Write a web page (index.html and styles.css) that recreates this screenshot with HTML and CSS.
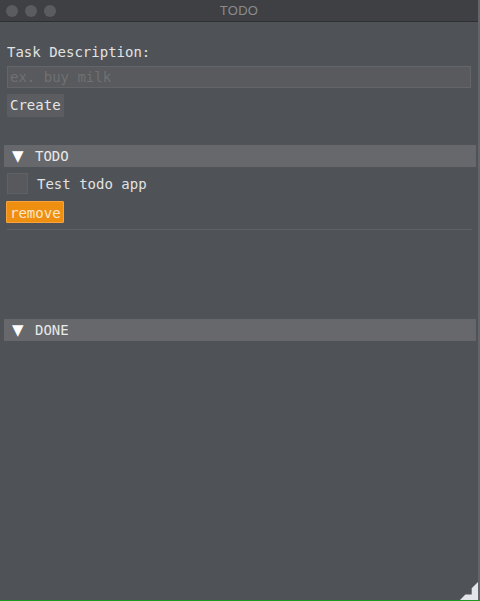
FILE: index.html
```html
<!DOCTYPE html>
<html>
<head>
<meta charset="utf-8">
<link rel="stylesheet" href="styles.css">
</head>
<body>
<div class="window">
  <div class="titlebar">
    <div class="lights"><span class="light"></span><span class="light"></span><span class="light"></span></div>
    <div class="title">TODO</div>
  </div>
  <div class="content">
    <div class="label">Task Description:</div>
    <div class="input">ex. buy milk</div>
    <div class="btn create">Create</div>
    <div class="header todo-header"><span class="tri">▼</span><span>TODO</span></div>
    <div class="item">
      <span class="check"></span><span class="item-text">Test todo app</span>
    </div>
    <div class="btn remove">remove</div>
    <div class="sep"></div>
    <div class="header done-header"><span class="tri">▼</span><span>DONE</span></div>
  </div>
  <div class="grip"></div>
</div>
</body>
</html>
```
FILE: styles.css
```css
* { box-sizing: border-box; }
html, body { margin: 0; padding: 0; }
body {
  width: 480px;
  height: 601px;
  background: #4f5257;
  font-family: "DejaVu Sans Mono", monospace;
  font-size: 14px;
  color: #e2e2e2;
  overflow: hidden;
}
.window {
  position: relative;
  width: 480px;
  height: 601px;
  display: flex;
  flex-direction: column;
  border-right: 2px solid #62656a;
  border-bottom: 1px solid #1c9a1c;
}
.titlebar {
  height: 22px;
  flex: none;
  background: #3f4043;
  border-bottom: 1px solid #2e2f31;
  display: flex;
  align-items: center;
  position: relative;
}
.lights {
  display: flex;
  gap: 7px;
  padding-left: 6px;
}
.light {
  width: 12px;
  height: 12px;
  border-radius: 50%;
  background: #5b5c5f;
}
.title {
  position: absolute;
  left: 0;
  right: 0;
  top: 0;
  bottom: 0;
  text-align: center;
  line-height: 22px;
  font-family: "Liberation Sans", Arial, sans-serif;
  font-size: 13px;
  color: #8a8b8d;
  letter-spacing: 0.3px;
}
.content {
  flex: 1;
  display: flex;
  flex-direction: column;
  padding: 0 2px 0 4px;
}
.label {
  margin-top: 21px;
  margin-left: 3px;
  line-height: 18px;
  height: 18px;
}
.input {
  margin-top: 5px;
  margin-left: 3px;
  margin-right: 5px;
  height: 22px;
  line-height: 20px;
  padding-left: 2px;
  background: #595a5d;
  border: 1px solid #646568;
  color: #6f7174;
}
.btn {
  align-self: flex-start;
  height: 23px;
  line-height: 23px;
  padding: 0 3px;
  border-radius: 1px;
}
.create {
  margin-top: 6px;
  margin-left: 3px;
  background: #5b5d60;
  color: #e6e6e6;
}
.header {
  height: 22px;
  background: #67686b;
  display: flex;
  align-items: center;
  color: #e8e8e8;
  border-radius: 1px;
}
.todo-header { margin-top: 28px; }
.done-header { margin-top: 89px; }
.tri {
  font-family: "DejaVu Sans", sans-serif;
  font-size: 15px;
  width: 31px;
  padding-left: 8px;
  color: #ffffff;
}
.item {
  margin-top: 6px;
  margin-left: 3px;
  display: flex;
  align-items: center;
  height: 21px;
}
.check {
  width: 21px;
  height: 21px;
  background: #57595c;
  border: 1px solid #5f6164;
}
.item-text {
  margin-left: 9px;
}
.remove {
  margin-top: 7px;
  margin-left: 2px;
  height: 22px;
  line-height: 22px;
  width: 58px;
  padding: 0 3px;
  background: #ef8f12;
  border: 1px solid #f9a43a;
  color: #fbe6c8;
}
.sep {
  margin-top: 6px;
  margin-left: 3px;
  margin-right: 4px;
  height: 1px;
  background: #5f6166;
}
.grip {
  position: absolute;
  right: 0;
  bottom: 0;
  width: 18px;
  height: 18px;
  background: #e4e5e8;
  clip-path: polygon(100% 0, 100% 100%, 0 100%, 30% 70%, 65% 70%, 65% 35%);
}
```
